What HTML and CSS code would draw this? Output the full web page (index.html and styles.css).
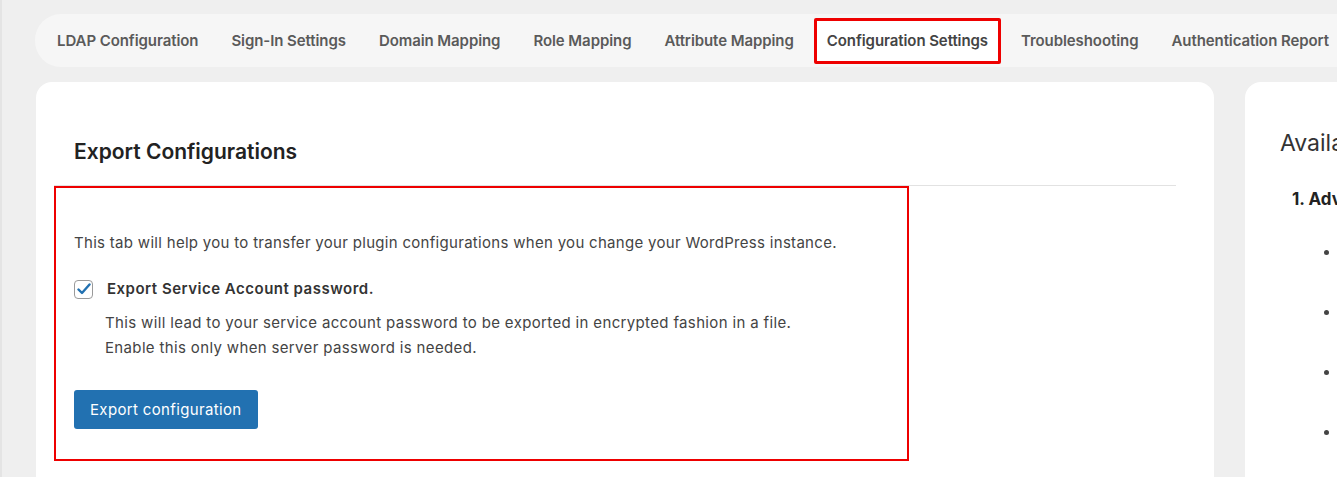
FILE: index.html
```html
<!DOCTYPE html>
<html>
<head>
    <title>LDAP Configuration Settings</title>
    <link rel="stylesheet" href="styles.css">
</head>
<body>
    <nav class="tabs">
        <a class="tab">LDAP Configuration</a>
        <a class="tab">Sign-In Settings</a>
        <a class="tab">Domain Mapping</a>
        <a class="tab">Role Mapping</a>
        <a class="tab">Attribute Mapping</a>
        <a class="tab active">Configuration Settings</a>
        <a class="tab">Troubleshooting</a>
        <a class="tab">Authentication Report</a>
    </nav>

    <div class="layout">
        <div class="card main">
            <div class="card-header">
                <h2>Export Configurations</h2>
            </div>

            <div class="highlight">
                <p class="intro">This tab will help you to transfer your plugin configurations when you change your WordPress instance.</p>

                <label class="check-row">
                    <span class="checkbox">
                        <svg width="14" height="12" viewBox="0 0 14 12"><path d="M1.5 6.5 L5 10 L12.5 1.5" fill="none" stroke="#2271b1" stroke-width="2.4" stroke-linecap="round" stroke-linejoin="round"/></svg>
                    </span>
                    Export Service Account password.
                </label>

                <p class="note">This will lead to your service account password to be exported in encrypted fashion in a file.<br>Enable this only when server password is needed.</p>

                <button class="btn">Export configuration</button>
            </div>
        </div>

        <div class="card side">
            <h3>Available Add-ons</h3>
            <h4>1. Advanced Custom Attributes</h4>
            <ul>
                <li>Sync user profile attributes</li>
                <li>Map LDAP groups to roles</li>
                <li>Custom login redirects</li>
                <li>Multiple directory support</li>
            </ul>
        </div>
    </div>
</body>
</html>
```

FILE: styles.css
```css
html, body {
    overflow: hidden;
}
body {
    margin: 0;
    height: 477px;
    background-color: #efefef;
    border-left: 2px solid #e4e4e4;
    font-family: Inter, "Noto Sans", Arial, sans-serif;
    color: #444;
}
.tabs {
    display: flex;
    align-items: center;
    gap: 7px;
    margin: 14px 0 0 33px;
    height: 53px;
    padding-left: 9px;
    background-color: #f6f6f6;
    border-radius: 26px 0 0 26px;
    white-space: nowrap;
}
.tab {
    font-size: 15px;
    font-weight: 600;
    color: #5a5a5a;
    padding: 10px 13px;
    line-height: 20px;
    letter-spacing: -0.08px;
}
.tab.active {
    color: #444;
    padding: 10px 10px;
    border: 3px solid #ee0000;
    border-radius: 2px;
    background-color: #fff;
}
.layout {
    display: flex;
    gap: 31px;
    margin: 15px 0 0 34px;
}
.card {
    background-color: #fff;
    border-radius: 16px;
    flex-shrink: 0;
    height: 420px;
}
.main {
    padding: 0 38px 0 18px;
    width: 1122px;
}
.card-header {
    padding: 57px 0 20px 20px;
    border-bottom: 1px solid #e2e2e2;
}
.card-header h2 {
    margin: 0;
    font-size: 21px;
    line-height: 26px;
    font-weight: 600;
    color: #222;
}
.highlight {
    width: 833px;
    border: 2px solid #ee0000;
    padding: 45px 0 30px 18px;
}
.intro {
    margin: 0;
    font-size: 15px;
    line-height: 20px;
    letter-spacing: 0.3px;
    color: #444;
}
.check-row {
    display: flex;
    align-items: center;
    gap: 14px;
    margin-top: 26px;
    font-size: 15px;
    line-height: 20px;
    font-weight: 600;
    letter-spacing: 0.5px;
    color: #333;
}
.checkbox {
    display: flex;
    align-items: center;
    justify-content: center;
    width: 17px;
    height: 17px;
    border: 1px solid #9a9a9a;
    border-radius: 4px;
}
.note {
    margin: 11px 0 0 31px;
    font-size: 15px;
    line-height: 25px;
    letter-spacing: 0.35px;
    color: #444;
}
.btn {
    display: block;
    margin-top: 30px;
    height: 39px;
    padding: 0 16px;
    background-color: #2271b1;
    color: #fff;
    border: none;
    border-radius: 3px;
    font-family: Inter, "Noto Sans", Arial, sans-serif;
    font-size: 15px;
    letter-spacing: 0.35px;
    cursor: pointer;
}
.side {
    width: 400px;
    padding: 0 35px;
}
.side h3 {
    margin: 46px 0 0;
    font-size: 23px;
    line-height: 30px;
    font-weight: 400;
    color: #333;
}
.side h4 {
    margin: 30px 0 0 12px;
    font-size: 17px;
    line-height: 22px;
    font-weight: 700;
    color: #222;
}
.side ul {
    margin: 32px 0 0;
    padding-left: 60px;
}
.side li {
    font-size: 14px;
    line-height: 20px;
    margin-bottom: 40px;
    color: #444;
}
```
